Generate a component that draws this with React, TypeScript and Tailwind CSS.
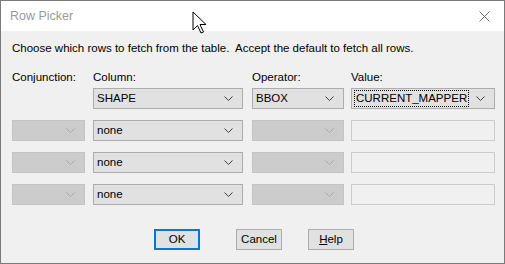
import React from 'react';

const font = { fontFamily: '"Liberation Sans", Arial, sans-serif' };

function Chevron({ disabled }: { disabled?: boolean }) {
  return (
    <svg width="9" height="5" viewBox="0 0 9 5" className="shrink-0">
      <path d="M0.5 0.5 L4.5 4.5 L8.5 0.5" fill="none" stroke={disabled ? '#a8a8a8' : '#404040'} strokeWidth="1" />
    </svg>
  );
}

function Combo({ value, width, disabled, focus }: { value?: string; width: string; disabled?: boolean; focus?: boolean }) {
  return (
    <div
      className={`flex h-[21px] items-center border pl-[2px] pr-[9px] ${width} ${
        disabled ? 'border-[#c4c4c4] bg-[#cccccc]' : 'border-[#adadad] bg-[#e1e1e1]'
      }`}
    >
      <div className="flex h-[17px] min-w-0 flex-1 items-center">
        <span
          className={`flex h-[17px] items-center px-[1px] text-[11.5px] text-black ${
            focus ? 'flex-1 border border-dotted border-black' : ''
          }`}
        >
          {value}
        </span>
      </div>
      <div className={focus ? 'ml-[9px]' : ''}>
        <Chevron disabled={disabled} />
      </div>
    </div>
  );
}

function Edit({ width }: { width: string }) {
  return <div className={`h-[21px] border border-[#cccccc] bg-[#f0f0f0] ${width}`} />;
}

const rows = [
  { conj: false, col: 'SHAPE', op: 'BBOX', val: 'CURRENT_MAPPER' },
  { conj: true, col: 'none' },
  { conj: true, col: 'none' },
  { conj: true, col: 'none' },
];

export default function App() {
  return (
    <div className="relative flex h-[264px] w-[505px] flex-col border border-[#7a7a7a] bg-[#f0f0f0]" style={font}>
      <div className="flex h-[30px] items-center justify-between bg-white pl-[9px] pr-[14px]">
        <span className="text-[12.5px] text-[#9a9a9a]">Row Picker</span>
        <svg width="11" height="11" viewBox="0 0 11 11">
          <path d="M0.5 0.5 L10.5 10.5 M10.5 0.5 L0.5 10.5" stroke="#707070" strokeWidth="1" />
        </svg>
      </div>

      <div className="flex flex-1 flex-col px-[11px] pt-[10px]">
        <p className="text-[11.5px] leading-[14px] text-black">
          Choose which rows to fetch from the table.&nbsp; Accept the default to fetch all rows.
        </p>

        <div className="mt-[15px] grid grid-cols-[81px_159px_99px_143px] gap-y-[11px] text-[11.5px] text-black">
          <span className="leading-[14px]">Conjunction:</span>
          <span className="leading-[14px]">Column:</span>
          <span className="leading-[14px]">Operator:</span>
          <span className="leading-[14px]">Value:</span>

          {rows.map((r, i) => (
            <React.Fragment key={i}>
              <div className={i === 0 ? '-mt-[7px]' : ''}>{r.conj ? <Combo width="w-[73px]" disabled /> : null}</div>
              <div className={i === 0 ? '-mt-[7px]' : ''}>
                <Combo width="w-[150px]" value={r.col} />
              </div>
              <div className={i === 0 ? '-mt-[7px]' : ''}>
                {r.op ? <Combo width="w-[92px]" value={r.op} /> : <Combo width="w-[92px]" disabled />}
              </div>
              <div className={i === 0 ? '-mt-[7px]' : ''}>
                {r.val ? <Combo width="w-[144px]" value={r.val} focus /> : <Edit width="w-[144px]" />}
              </div>
            </React.Fragment>
          ))}
        </div>

        <div className="mt-[24px] flex text-[11.5px] text-black">
          <button className="ml-[142px] h-[21px] w-[46px] border-2 border-[#0078d7] bg-[#e1e1e1]">OK</button>
          <button className="ml-[36px] h-[21px] w-[46px] border border-[#adadad] bg-[#e1e1e1]">Cancel</button>
          <button className="ml-[26px] h-[21px] w-[46px] border border-[#adadad] bg-[#e1e1e1]">
            <span className="underline">H</span>elp
          </button>
        </div>
      </div>

      <svg className="absolute left-[191px] top-[10px]" width="18" height="26" viewBox="0 0 18 26">
        <path d="M1 1 L1 19 L5.5 14.5 L9 22 L11.5 21 L8 13.5 L14 13.5 Z" fill="white" stroke="black" strokeWidth="1" strokeLinejoin="round" />
      </svg>
    </div>
  );
}
